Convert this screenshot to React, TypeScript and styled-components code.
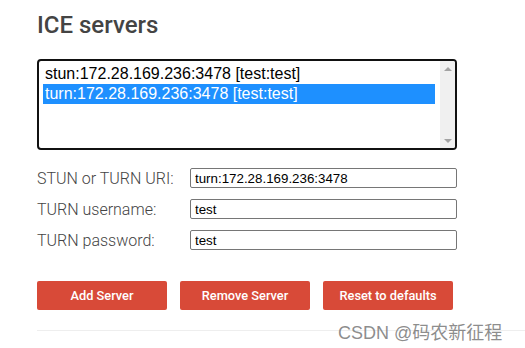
import React from 'react';
import styled, { createGlobalStyle } from 'styled-components';

const GlobalStyle = createGlobalStyle`
  html, body {
    margin: 0;
    padding: 0;
    background: #fff;
  }
  body {
    font-family: Roboto, "Noto Sans", sans-serif;
    font-weight: 300;
    color: #444;
    overflow: hidden;
  }
`;

const Page = styled.div`
  position: relative;
  width: 525px;
  height: 348px;
  padding: 11px 0 0 37px;
  box-sizing: border-box;
`;

const Heading = styled.h2`
  margin: 0 0 20px;
  font-size: 24px;
  line-height: 28px;
  font-weight: 500;
  color: #444;
`;

const ListBox = styled.div`
  display: flex;
  width: 420px;
  height: 91px;
  box-sizing: border-box;
  border: 2px solid #111;
  border-radius: 4px;
  overflow: hidden;
  background: #fff;
`;

const Options = styled.div`
  flex: 1;
  padding: 3px 5px 0 4px;
`;

const Option = styled.div<{ $selected?: boolean }>`
  height: 20px;
  line-height: 19px;
  padding: 0 2px;
  font-family: "Liberation Sans", Arial, sans-serif;
  font-size: 16px;
  font-weight: 400;
  white-space: nowrap;
  color: ${(p) => (p.$selected ? '#fff' : '#000')};
  background: ${(p) => (p.$selected ? '#1e90ff' : 'transparent')};
`;

const ScrollBar = styled.div`
  width: 15px;
  background: #f0f0f0;
  display: flex;
  flex-direction: column;
  justify-content: space-between;
  align-items: center;
  padding: 6px 0 5px;
  box-sizing: border-box;
`;

const Arrow = styled.div<{ $down?: boolean }>`
  width: 0;
  height: 0;
  border-left: 4px solid transparent;
  border-right: 4px solid transparent;
  ${(p) =>
    p.$down
      ? 'border-top: 4px solid #a3a3a3;'
      : 'border-bottom: 4px solid #a3a3a3;'}
`;

const Fields = styled.div`
  display: flex;
  flex-direction: column;
  gap: 11px;
  margin-top: 18px;
`;

const Row = styled.div`
  display: flex;
  align-items: center;
  height: 20px;
`;

const Label = styled.label`
  width: 153px;
  font-size: 16px;
  color: #444;
`;

const Input = styled.input`
  width: 267px;
  height: 20px;
  box-sizing: border-box;
  border: 1px solid #767676;
  border-radius: 2px;
  padding: 1px 4px;
  font-family: "Liberation Sans", Arial, sans-serif;
  font-size: 13.33px;
  color: #000;
  outline: none;
`;

const Buttons = styled.div`
  display: flex;
  gap: 13px;
  margin-top: 31px;
`;

const Button = styled.button`
  width: 130px;
  height: 29px;
  border: none;
  border-radius: 2px;
  background: #d84a38;
  color: #fff;
  font-family: Roboto, sans-serif;
  font-size: 12.8px;
  font-weight: 500;
  padding: 0;
`;

const Rule = styled.hr`
  margin: 20px 0 0;
  border: none;
  border-top: 1px solid #eee;
  width: 500px;
`;

const Watermark = styled.div`
  position: absolute;
  left: 338px;
  top: 318px;
  font-family: "Liberation Sans", "Noto Sans CJK SC", sans-serif;
  font-size: 18px;
  font-weight: 400;
  color: rgba(120, 120, 120, 0.85);
  white-space: nowrap;
`;

export default function App() {
  return (
    <Page>
      <GlobalStyle />
      <Heading>ICE servers</Heading>
      <ListBox>
        <Options>
          <Option>stun:172.28.169.236:3478 [test:test]</Option>
          <Option $selected>turn:172.28.169.236:3478 [test:test]</Option>
        </Options>
        <ScrollBar>
          <Arrow />
          <Arrow $down />
        </ScrollBar>
      </ListBox>
      <Fields>
        <Row>
          <Label>STUN or TURN URI:</Label>
          <Input defaultValue="turn:172.28.169.236:3478" />
        </Row>
        <Row>
          <Label>TURN username:</Label>
          <Input defaultValue="test" />
        </Row>
        <Row>
          <Label>TURN password:</Label>
          <Input defaultValue="test" />
        </Row>
      </Fields>
      <Buttons>
        <Button>Add Server</Button>
        <Button>Remove Server</Button>
        <Button>Reset to defaults</Button>
      </Buttons>
      <Rule />
      <Watermark>CSDN @码农新征程</Watermark>
    </Page>
  );
}
